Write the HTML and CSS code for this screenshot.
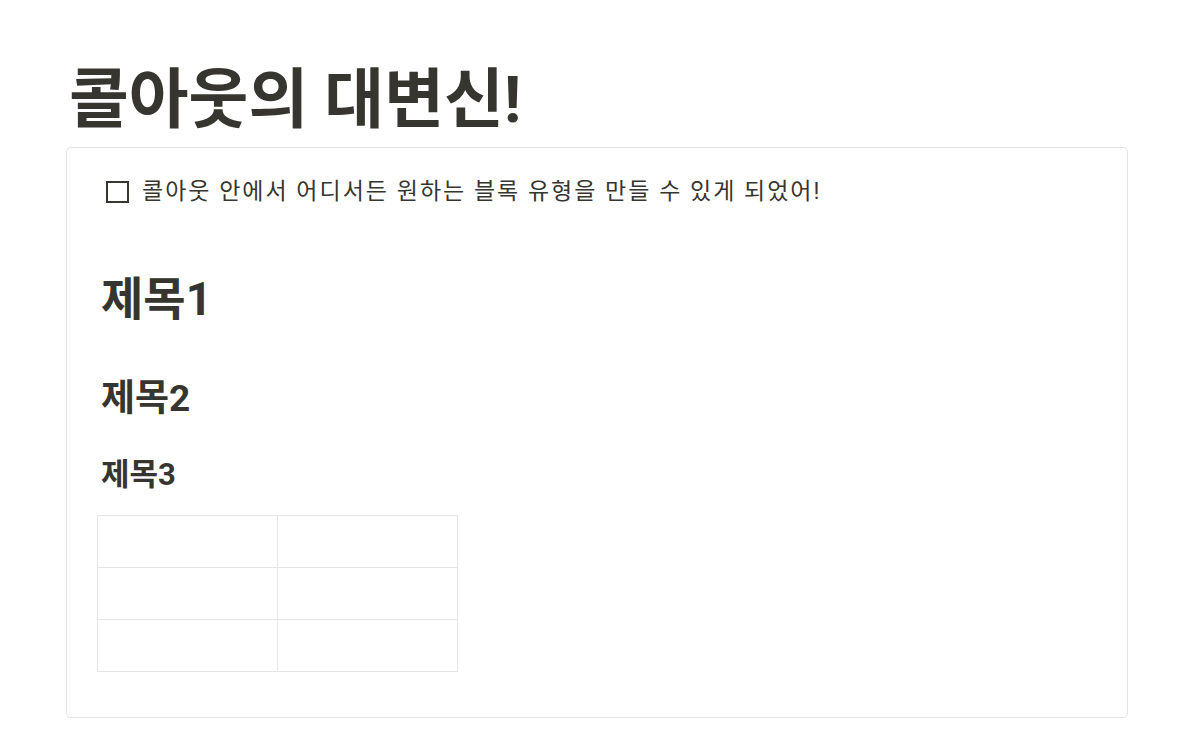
FILE: index.html
```html
<!DOCTYPE html>
<html lang="ko">
<head>
<meta charset="utf-8">
<title>콜아웃의 대변신!</title>
<link rel="stylesheet" href="styles.css">
</head>
<body>
<main class="page">
  <h1 class="title">콜아웃의 대변신!</h1>
  <section class="callout">
    <div class="todo">
      <span class="checkbox"></span>
      <span class="todo-text">콜아웃 안에서 어디서든 원하는 블록 유형을 만들 수 있게 되었어!</span>
    </div>
    <h2 class="h1">제목1</h2>
    <h3 class="h2">제목2</h3>
    <h4 class="h3">제목3</h4>
    <table class="grid">
      <tr><td></td><td></td></tr>
      <tr><td></td><td></td></tr>
      <tr><td></td><td></td></tr>
    </table>
  </section>
</main>
</body>
</html>
```
FILE: styles.css
```css
html, body { margin: 0; padding: 0; background: #fff; }
body {
  font-family: Roboto, "Noto Sans CJK KR", sans-serif;
  color: #37352f;
}
.page {
  padding: 60px 76px 0 66px;
}
.title {
  margin: 0 0 6px 3px;
  font-size: 65px;
  line-height: 81px;
  font-weight: 700;
  height: 81px;
}
.callout {
  border: 1px solid #e3e3e3;
  border-radius: 5px;
  padding: 29px 30px 45px 30px;
}
.todo {
  display: flex;
  align-items: center;
  gap: 13px;
  margin-left: 9px;
}
.checkbox {
  width: 19px;
  height: 18px;
  border: 2px solid #37352f;
  flex: none;
}
.todo-text {
  font-size: 23px;
  line-height: 30px;
  letter-spacing: 2px;
}
.h1 {
  margin: 62px 0 0 4px;
  font-size: 46px;
  line-height: 60px;
  font-weight: 700;
}
.h2 {
  margin: 46px 0 0 4px;
  font-size: 37px;
  line-height: 48px;
  font-weight: 700;
}
.h3 {
  margin: 32px 0 0 4px;
  font-size: 31px;
  line-height: 40px;
  font-weight: 700;
}
.grid {
  margin-top: 20px;
  border-collapse: collapse;
}
.grid td {
  width: 179px;
  height: 51px;
  border: 1px solid #e6e6e6;
  padding: 0;
}
```
